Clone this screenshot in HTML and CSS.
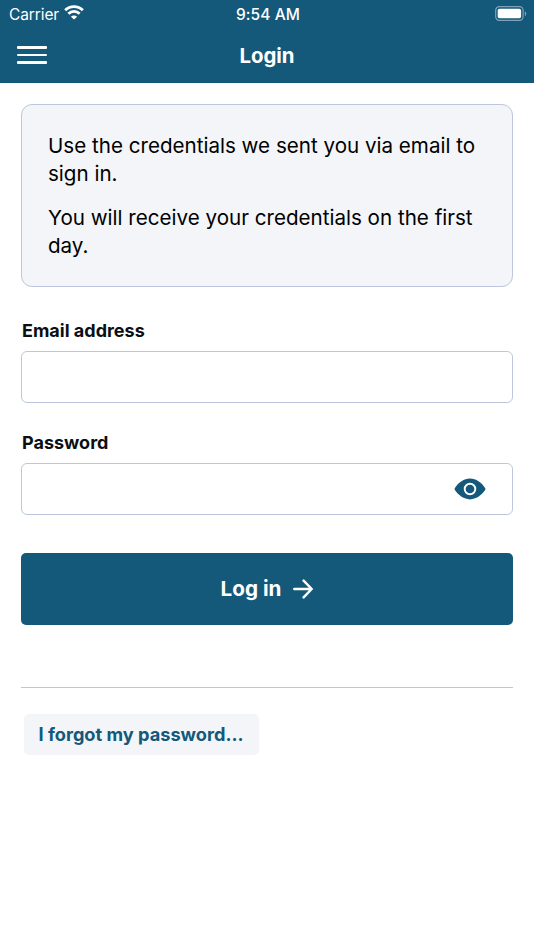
FILE: index.html
```html
<!DOCTYPE html>
<html lang="en">
<head>
    <meta charset="UTF-8">
    <meta name="viewport" content="width=device-width, initial-scale=1.0">
    <title>Login</title>
    <link rel="stylesheet" href="styles.css">
</head>
<body>
    <header class="header">
        <div class="status-bar">
            <div class="carrier">
                <span>Carrier</span>
                <svg class="wifi" width="20" height="15" viewBox="0 0 20 15" fill="none" stroke="#fff" stroke-width="2.9">
                    <path d="M1.2 5.2a12.6 12.6 0 0 1 17.6 0"/>
                    <path d="M4.4 8.7a8 8 0 0 1 11.2 0"/>
                    <path d="M10 14.6L6.9 11.7a4.4 4.4 0 0 1 6.2 0z" fill="#fff" stroke="none"/>
                </svg>
            </div>
            <div class="time">9:54 AM</div>
            <div class="battery">
                <svg width="32" height="15" viewBox="0 0 32 15">
                    <rect x="0.7" y="0.7" width="27.4" height="13.6" rx="3.6" fill="none" stroke="#7fa2b8" stroke-width="1.2"/>
                    <rect x="2.7" y="2.7" width="23.4" height="9.6" rx="1.8" fill="#fff"/>
                    <path d="M29.8 5.2v4.8c2-.8 2-4 0-4.8z" fill="#7fa2b8"/>
                </svg>
            </div>
        </div>
        <div class="nav-bar">
            <button class="menu-button" aria-label="Menu">
                <span></span>
                <span></span>
                <span></span>
            </button>
            <h1>Login</h1>
        </div>
    </header>

    <main class="content">
        <div class="info">
            <p>Use the credentials we sent you via email to sign in.</p>
            <p>You will receive your credentials on the first day.</p>
        </div>

        <form class="login-form">
            <label for="email">Email address</label>
            <div class="field">
                <input type="email" id="email">
            </div>
            <label for="password">Password</label>
            <div class="field">
                <input type="password" id="password">
                <button type="button" class="show-password" aria-label="Show password">
                    <svg width="32" height="22" viewBox="0 0 32 22">
                        <path d="M16 .6C10 .6 4.600 4.600.9 9.900a1.900 1.900 0 0 0 0 2.200C4.600 17.400 10 21.400 16 21.400s11.400-4 15.100-9.300a1.900 1.900 0 0 0 0-2.200C27.400 4.600 22 .6 16 .6z" fill="#14587a"/>
                        <circle cx="16" cy="11" r="5.3" fill="none" stroke="#fff" stroke-width="1.9"/>
                    </svg>
                </button>
            </div>
            <button type="submit" class="login-button">
                <span>Log in</span>
                <svg width="20" height="20" viewBox="0 0 20 20" fill="none" stroke="#fff" stroke-width="2.5" stroke-linecap="round" stroke-linejoin="round">
                    <path d="M1.3 10h17.2M10.6 1.7l8.1 8.3-8.1 8.3"/>
                </svg>
            </button>
        </form>

        <div class="footer">
            <button class="forgot-button">I forgot my password...</button>
        </div>
    </main>

    <script>
        const password = document.getElementById('password');

        document.querySelector('.show-password').addEventListener('click', () => {
            password.type = password.type === 'password' ? 'text' : 'password';
        });
    </script>
</body>
</html>
```
FILE: styles.css
```css
* {
    box-sizing: border-box;
}
body {
    margin: 0;
    background-color: #fff;
    font-family: Inter, "Liberation Sans", sans-serif;
    color: #0c0f14;
}
button {
    font-family: inherit;
    border: none;
    cursor: pointer;
}
svg {
    display: block;
}
.header {
    height: 83px;
    background-color: #14587a;
    color: #fff;
}
.status-bar {
    display: grid;
    grid-template-columns: 1fr auto 1fr;
    align-items: center;
    height: 27px;
    padding: 0 7px 0 9px;
    font-size: 15.5px;
}
.carrier {
    display: flex;
    align-items: center;
    gap: 5px;
    letter-spacing: -0.1px;
}
.carrier span,
.time {
    padding-top: 1px;
}
.wifi {
    margin-top: -2px;
}
.time {
    font-weight: 500;
    letter-spacing: 0.1px;
}
.battery {
    display: flex;
    justify-content: flex-end;
}
.nav-bar {
    display: grid;
    grid-template-columns: 30px 1fr 30px;
    align-items: center;
    height: 56px;
    padding: 0 17px;
}
.nav-bar h1 {
    margin: 0;
    font-size: 20.4px;
    font-weight: 700;
    text-align: center;
}
.menu-button {
    display: flex;
    flex-direction: column;
    gap: 5px;
    padding: 0;
    background: none;
}
.menu-button span {
    height: 2.5px;
    border-radius: 1px;
    background-color: #fff;
}
.content {
    padding: 20.5px 21px;
}
.info {
    height: 183px;
    padding: 27px 26px 0;
    background-color: #f3f5f9;
    border: 1.4px solid #bcc6dc;
    border-radius: 11px;
    color: #000;
    font-size: 20.6px;
    line-height: 28.5px;
}
.info p {
    margin: 0 0 15px;
}
.login-form {
    margin-top: 32px;
}
.login-form label {
    display: block;
    margin-left: 1px;
    font-size: 18px;
    font-weight: 700;
    line-height: 24px;
}
.field {
    display: flex;
    align-items: center;
    height: 52px;
    margin: 8.5px 0 27.5px;
    padding-right: 26px;
    border: 1.4px solid #bcc6dc;
    border-radius: 6px;
}
.field input {
    flex: 1;
    height: 100%;
    padding: 0 14px;
    border: none;
    outline: none;
    background: none;
    font: inherit;
    font-size: 20px;
}
.show-password {
    padding: 0;
    background: none;
}
.login-button {
    display: flex;
    justify-content: center;
    align-items: center;
    gap: 12px;
    width: 100%;
    height: 72px;
    margin-top: 37.5px;
    background-color: #14587a;
    border-radius: 5px;
    color: #fff;
    font-size: 20.7px;
    font-weight: 700;
}
.footer {
    margin-top: 62px;
    padding: 26px 2.5px 0;
    border-top: 1.4px solid #bcc6dc;
}
.forgot-button {
    height: 41px;
    padding: 0 15px;
    background-color: #f3f5f9;
    border-radius: 5px;
    color: #14587a;
    font-size: 18.2px;
    font-weight: 700;
}
```
